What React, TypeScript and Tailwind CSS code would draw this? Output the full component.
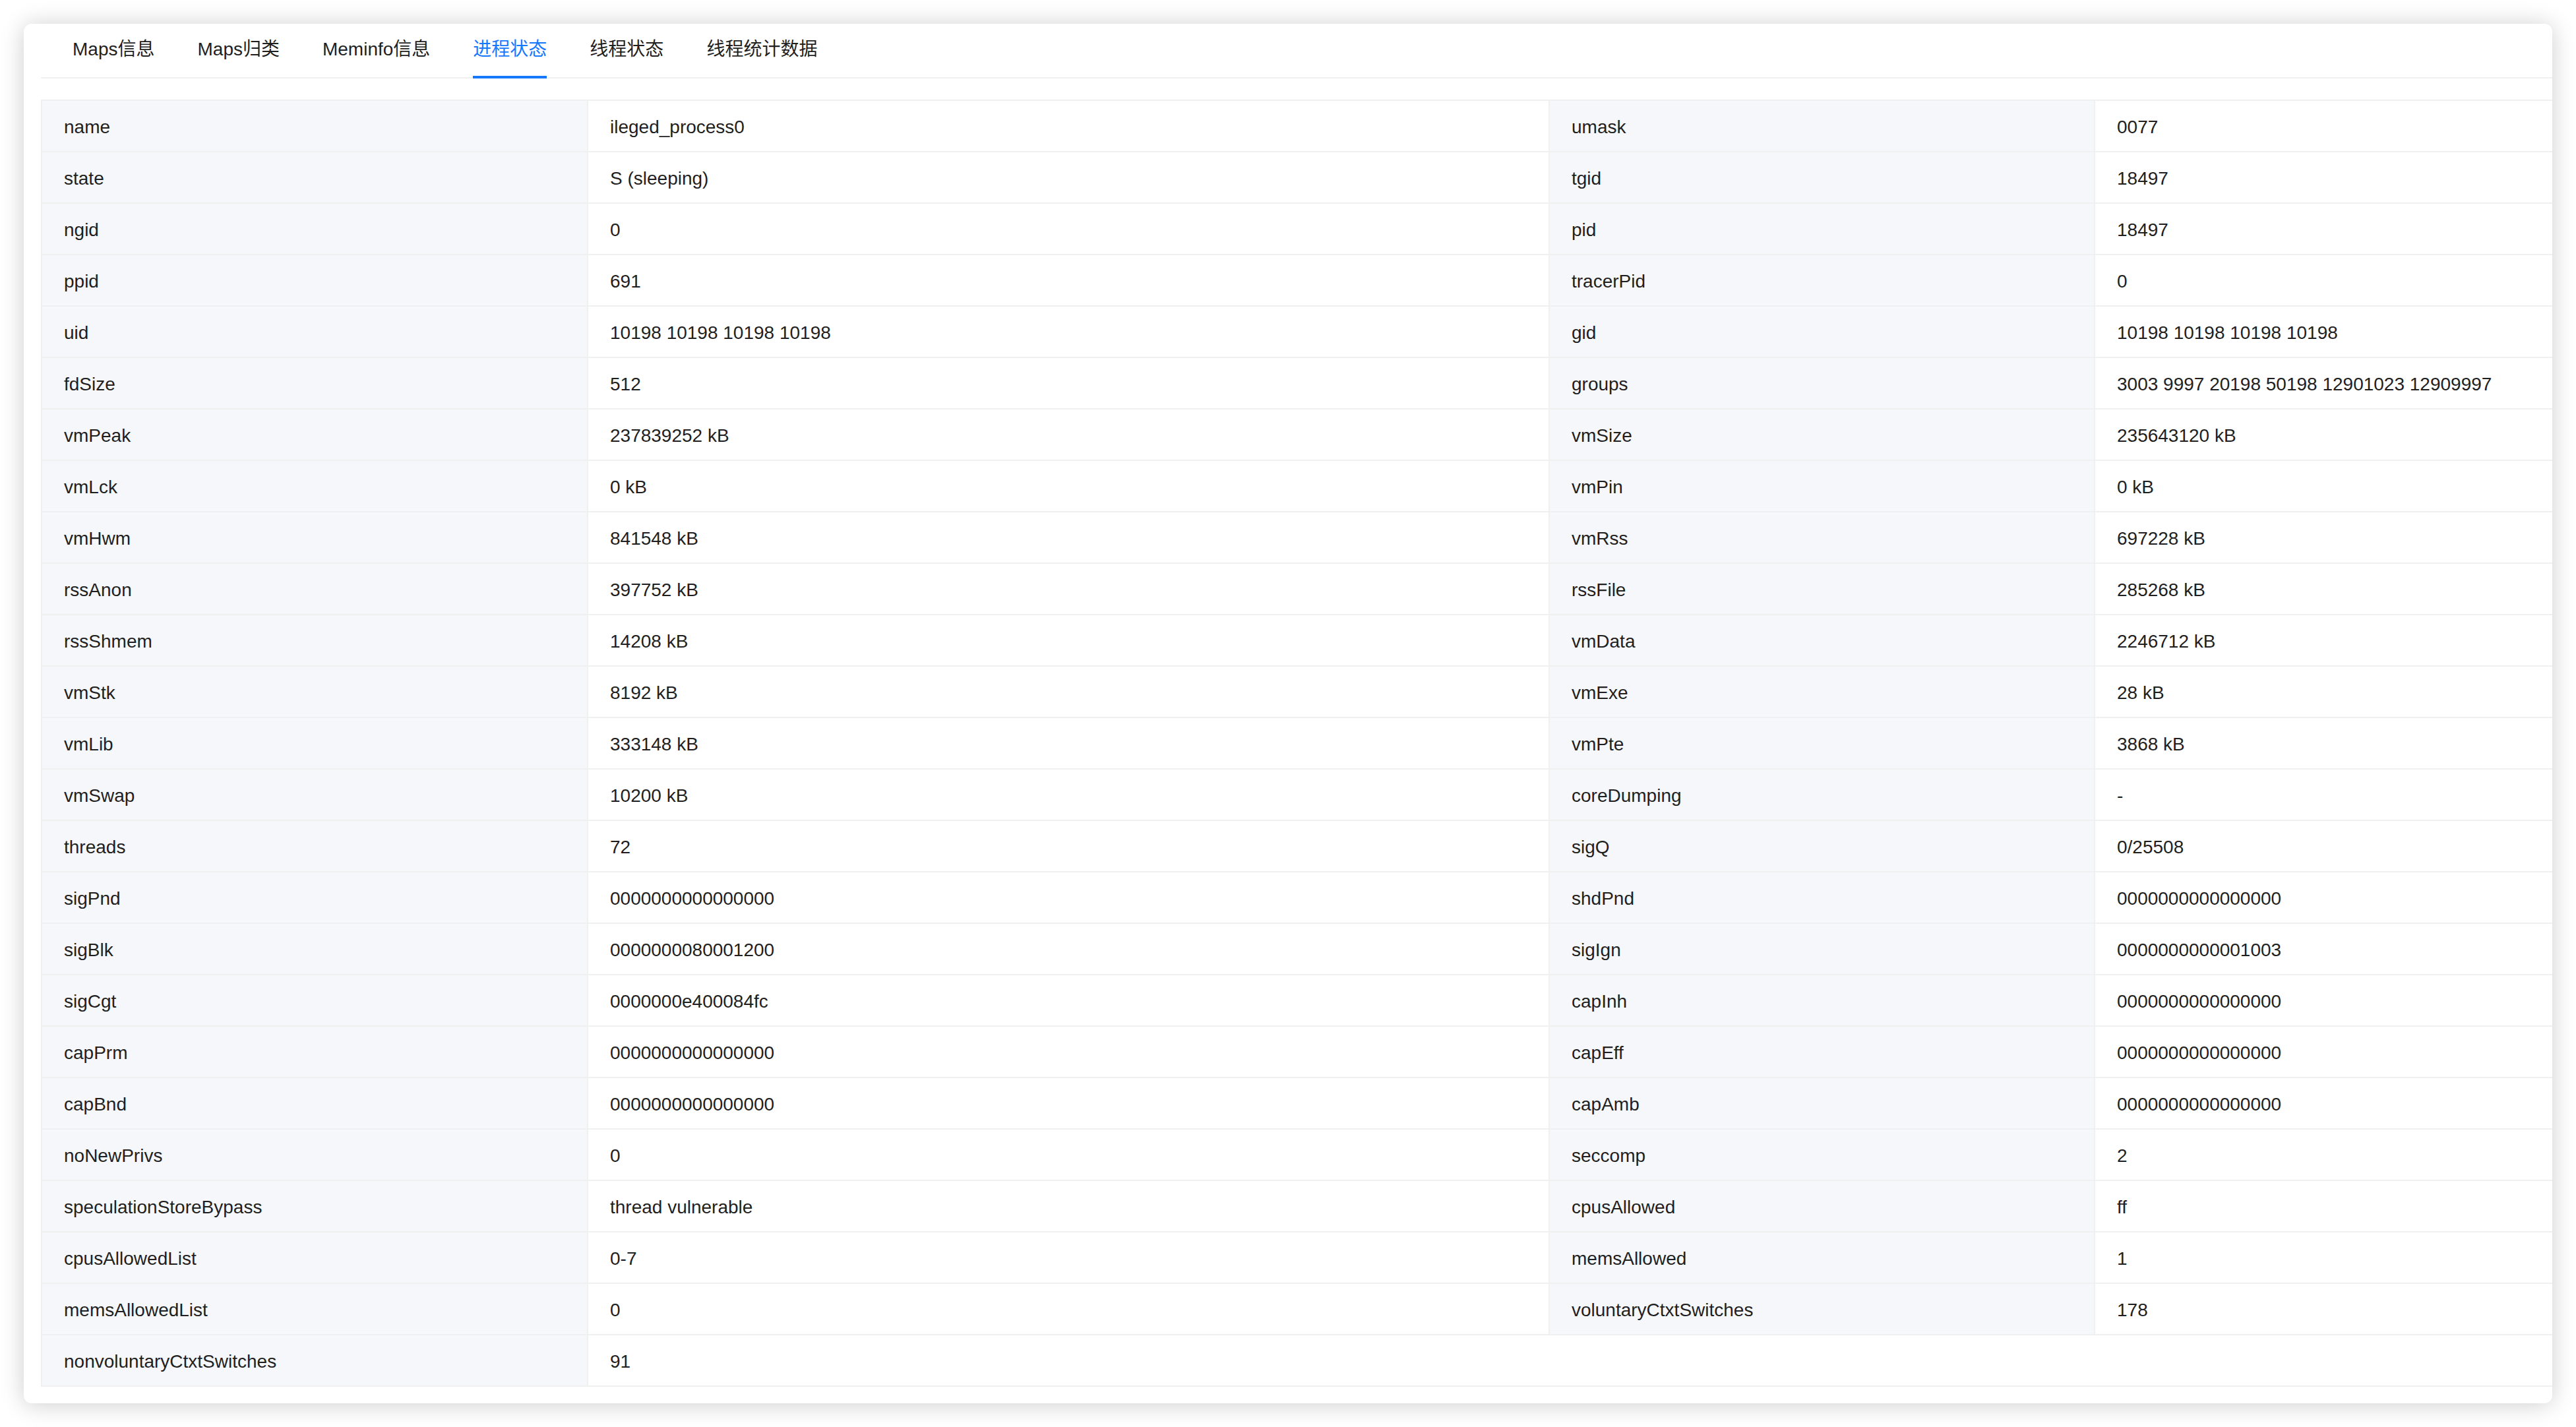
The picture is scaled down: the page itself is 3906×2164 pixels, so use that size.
import React from "react";

const rows: [string, string, string?, string?][] = [
  ["name", "ileged_process0", "umask", "0077"],
  ["state", "S (sleeping)", "tgid", "18497"],
  ["ngid", "0", "pid", "18497"],
  ["ppid", "691", "tracerPid", "0"],
  ["uid", "10198 10198 10198 10198", "gid", "10198 10198 10198 10198"],
  ["fdSize", "512", "groups", "3003 9997 20198 50198 12901023 12909997"],
  ["vmPeak", "237839252 kB", "vmSize", "235643120 kB"],
  ["vmLck", "0 kB", "vmPin", "0 kB"],
  ["vmHwm", "841548 kB", "vmRss", "697228 kB"],
  ["rssAnon", "397752 kB", "rssFile", "285268 kB"],
  ["rssShmem", "14208 kB", "vmData", "2246712 kB"],
  ["vmStk", "8192 kB", "vmExe", "28 kB"],
  ["vmLib", "333148 kB", "vmPte", "3868 kB"],
  ["vmSwap", "10200 kB", "coreDumping", "-"],
  ["threads", "72", "sigQ", "0/25508"],
  ["sigPnd", "0000000000000000", "shdPnd", "0000000000000000"],
  ["sigBlk", "0000000080001200", "sigIgn", "0000000000001003"],
  ["sigCgt", "0000000e400084fc", "capInh", "0000000000000000"],
  ["capPrm", "0000000000000000", "capEff", "0000000000000000"],
  ["capBnd", "0000000000000000", "capAmb", "0000000000000000"],
  ["noNewPrivs", "0", "seccomp", "2"],
  ["speculationStoreBypass", "thread vulnerable", "cpusAllowed", "ff"],
  ["cpusAllowedList", "0-7", "memsAllowed", "1"],
  ["memsAllowedList", "0", "voluntaryCtxtSwitches", "178"],
  ["nonvoluntaryCtxtSwitches", "91"],
];

const tabs = ["Maps信息", "Maps归类", "Meminfo信息", "进程状态", "线程状态", "线程统计数据"];

export default function App() {
  return (
    <div
      className="bg-white p-[36px] text-[28px] text-[#1f1f1f]"
      style={{ fontFamily: '"Liberation Sans", Arial, "Noto Sans CJK SC", sans-serif' }}
    >
      <div className="overflow-hidden rounded-[12px] bg-white pl-[26px] pb-[25px] shadow-[0_2px_36px_rgba(0,0,0,0.2)]">
        <div className="flex h-[83px] gap-[65px] border-b-2 border-[#f0f0f0] pl-[48px]">
          {tabs.map((t, i) => (
            <div key={t} className="relative h-[81px] pt-[17px]">
              <span className={`block leading-[44px] ${i === 3 ? "text-[#1677ff]" : "text-[#1f1f1f]"}`}>{t}</span>
              {i === 3 && <div className="absolute bottom-[-2px] left-0 right-0 h-[4px] bg-[#1677ff]" />}
            </div>
          ))}
        </div>
        <div className="mt-[32px] w-[3900px] border-l-2 border-t-2 border-[#f0f0f0]">
          {rows.map(([k1, v1, k2, v2]) => (
            <div key={k1} className="grid h-[78px] grid-cols-[826px_2px_1456px_2px_825px_2px_1000px] border-b-2 border-[#f0f0f0]">
              <div className="flex items-center bg-[#f6f7fa] pl-[33px] pt-[4px]">{k1}</div>
              <div className="bg-[#f0f0f0]" />
              {k2 !== undefined ? (
                <>
                  <div className="flex items-center pl-[33px] pt-[4px]">{v1}</div>
                  <div className="bg-[#f0f0f0]" />
                  <div className="flex items-center bg-[#f6f7fa] pl-[33px] pt-[4px]">{k2}</div>
                  <div className="bg-[#f0f0f0]" />
                  <div className="flex items-center pl-[33px] pt-[4px]">{v2}</div>
                </>
              ) : (
                <div className="col-span-5 flex items-center pl-[33px] pt-[4px]">{v1}</div>
              )}
            </div>
          ))}
        </div>
      </div>
    </div>
  );
}
